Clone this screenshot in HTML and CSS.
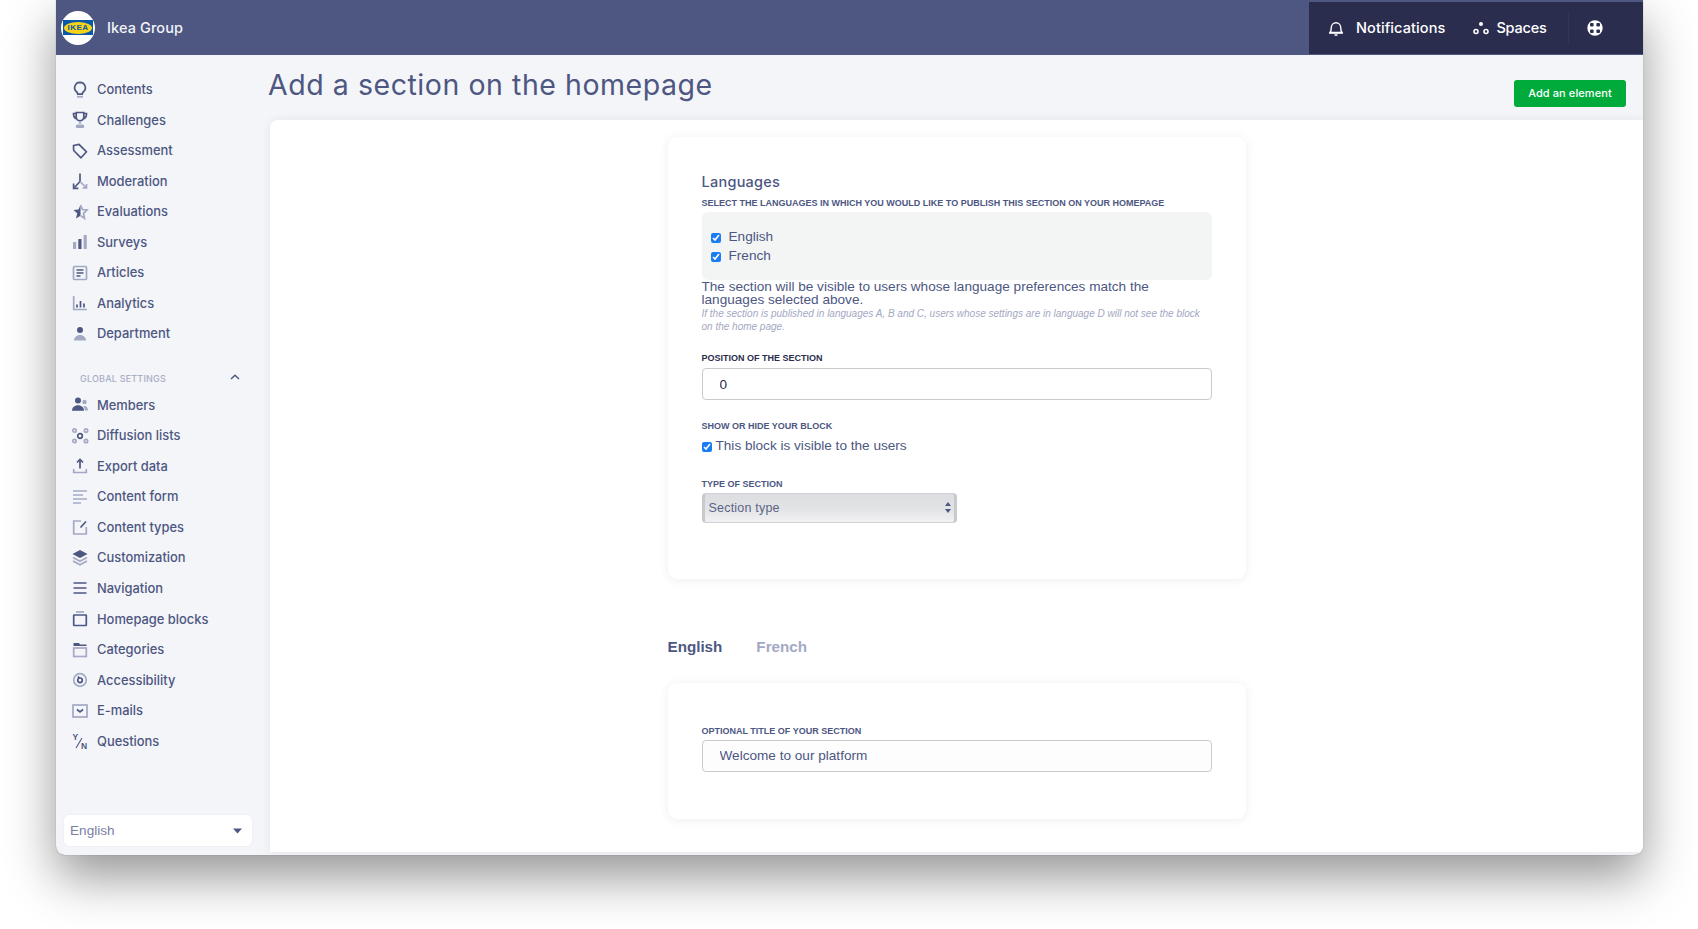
FILE: index.html
```html
<!DOCTYPE html>
<html lang="en">
<head>
<meta charset="utf-8">
<title>Add a section on the homepage</title>
<link rel="stylesheet" href="styles.css">
</head>
<body>
<div class="window">
  <header class="topbar">
    <div class="brand">
      <span class="logo"><span class="logo-oval"><span class="logo-text">IKEA</span></span></span>
      <span class="brand-name">Ikea Group</span>
    </div>
    <nav class="topnav">
      <a class="topnav-item notif"><svg class="top-icon" width="16" height="18" viewBox="0 0 16 18"><path d="M2 13.500c1-1 1.300-2.500 1.300-5a4.700 4.700 0 0 1 9.400 0c0 2.500.3 4 1.300 5z" fill="none" stroke="#fff" stroke-width="1.400" stroke-linejoin="round"/><path d="M1 14h14M6.500 16h3" stroke="#fff" stroke-width="1.400"/></svg>Notifications</a>
      <a class="topnav-item spaces"><svg class="top-icon" width="16" height="14" viewBox="0 0 16 14"><circle cx="8" cy="3" r="2" fill="#fff"/><circle cx="3" cy="10.500" r="2" fill="none" stroke="#fff" stroke-width="1.600"/><circle cx="13" cy="10.500" r="2" fill="none" stroke="#fff" stroke-width="1.600"/></svg>Spaces</a>
      <span class="topnav-sep"></span>
      <a class="help"><svg width="16" height="16" viewBox="0 0 16 16"><circle cx="8" cy="8" r="7.700" fill="#fff"/><rect x="3" y="3" width="3.600" height="3.600" rx="1" fill="#2b2d4e"/><rect x="9.400" y="3" width="3.600" height="3.600" rx="1" fill="#2b2d4e"/><rect x="3" y="9.400" width="3.600" height="3.600" rx="1" fill="#2b2d4e"/><rect x="9.400" y="9.400" width="3.600" height="3.600" rx="1" fill="#2b2d4e"/></svg></a>
    </nav>
  </header>
  <div class="body">
    <aside class="sidebar">
      <ul class="menu">
        <li class="menu-item"><svg class="ico" viewBox="0 0 20 20"><path class="d" d="M10 2.300a5.400 5.400 0 0 0-3.200 9.700c.6.500.8 1.300.9 2.200h4.600c.1-.9.300-1.700.9-2.200A5.400 5.400 0 0 0 10 2.300z"/><path class="l" d="M7 16.800h6"/></svg>Contents</li>
        <li class="menu-item"><svg class="ico" viewBox="0 0 20 20"><path class="d" d="M6.200 2.500h7.600v4.500a3.800 3.800 0 0 1-7.600 0zM6.200 3.500H3.500c0 3 1 4.800 3.300 5.500M13.800 3.500h2.700c0 3-1 4.800-3.300 5.500"/><path class="l" d="M10 11v3"/><rect class="lf" x="5.800" y="14.500" width="8.400" height="3.500" rx="1.500"/></svg>Challenges</li>
        <li class="menu-item"><svg class="ico" viewBox="0 0 20 20"><path class="d" d="M3.500 4.500l5.500-1.200 7.500 7.500-5.500 6-7.300-7.300z" stroke-linejoin="round"/></svg>Assessment</li>
        <li class="menu-item"><svg class="ico" viewBox="0 0 20 20"><path class="d" d="M10 2.500v8L4.500 16.500"/><path class="d" d="M3.600 12.500v4.800h4.800"/><path class="l" d="M10 10.500l6 6M16.500 13v4h-4"/></svg>Moderation</li>
        <li class="menu-item"><svg class="ico" viewBox="0 0 20 20"><path class="df" d="M10.500 3L8.500 7.500 3.500 8l3.700 3.300L6 16.500l4.500-2.800z"/><path class="l" d="M10.500 3l2 4.500 4.500.5-3.500 3.300 1 5-4-2.700" stroke-width="1"/></svg>Evaluations</li>
        <li class="menu-item"><svg class="ico" viewBox="0 0 20 20"><rect class="lf" x="3" y="10" width="3.200" height="7" rx=".5"/><rect class="df" x="8.300" y="7" width="3.200" height="10" rx=".5"/><rect class="lf" x="13.600" y="3" width="3.200" height="14" rx=".5"/></svg>Surveys</li>
        <li class="menu-item"><svg class="ico" viewBox="0 0 20 20"><rect class="l" x="3.500" y="3.500" width="13" height="13" rx="1" stroke-width="1.400"/><path class="d" d="M6.500 7h7M6.500 10h7M6.500 13h4"/></svg>Articles</li>
        <li class="menu-item"><svg class="ico" viewBox="0 0 20 20"><path class="l" d="M3.700 3v13.500h13.300" stroke-width="1.200"/><path class="d" d="M7 11.500v3M10.500 8v6.500M14 10.500v4"/></svg>Analytics</li>
        <li class="menu-item"><svg class="ico" viewBox="0 0 20 20"><circle class="df" cx="10" cy="6" r="3"/><path class="lf" d="M4 16.500c0-3 2.500-5.500 6-5.500s6 2.500 6 5.500z"/></svg>Department</li>
      </ul>
      <div class="menu-group">
        <span>GLOBAL SETTINGS</span>
        <svg width="10" height="6" viewBox="0 0 10 6"><path d="M1 5l4-3.800L9 5" fill="none" stroke="#4d5782" stroke-width="1.500"/></svg>
      </div>
      <ul class="menu">
        <li class="menu-item"><svg class="ico" viewBox="0 0 20 20"><circle class="df" cx="8" cy="5.500" r="3"/><path class="df" d="M2 15.800c0-3.200 2.600-5.500 6-5.500s6 2.300 6 5.500z"/><circle class="lf" cx="14.500" cy="7" r="2.200"/><path class="lf" d="M14.500 11c2 0 3.500 1.800 3.500 4.500h-3c-.2-1.600-.7-3-1.800-4.300z"/></svg>Members</li>
        <li class="menu-item"><svg class="ico" viewBox="0 0 20 20"><circle class="d" cx="10" cy="10" r="2.300" stroke-width="1.500"/><g class="l" stroke-width="1.200"><circle cx="4.500" cy="4.500" r="1.700"/><circle cx="16" cy="4.500" r="1.700"/><circle cx="4.500" cy="15" r="1.700"/><circle cx="16" cy="15" r="1.700"/></g></svg>Diffusion lists</li>
        <li class="menu-item"><svg class="ico" viewBox="0 0 20 20"><path class="d" d="M10 12.500V4M7 6.500l3-3 3 3"/><path class="l" d="M3.700 13v3.500h12.600V13" stroke-width="1.300"/></svg>Export data</li>
        <li class="menu-item"><svg class="ico" viewBox="0 0 20 20"><path class="l" d="M3 4h14M3 8h10M3 12h14M3 16h8" stroke-width="1.300"/></svg>Content form</li>
        <li class="menu-item"><svg class="ico" viewBox="0 0 20 20"><path class="l" d="M11 4H3.700v13h12.600v-7" stroke-width="1.400"/><path class="d" d="M10.500 10.500l5.500-6"/></svg>Content types</li>
        <li class="menu-item"><svg class="ico" viewBox="0 0 20 20"><path class="df" d="M10 2l7.500 4-7.500 4-7.500-4z"/><path class="l" d="M3 9.500l7 3.700 7-3.700M3 13l7 3.800 7-3.800" stroke-width="1.300"/></svg>Customization</li>
        <li class="menu-item"><svg class="ico" viewBox="0 0 20 20"><path class="d" d="M3.500 5h13M3.500 10h13M3.500 15h13"/></svg>Navigation</li>
        <li class="menu-item"><svg class="ico" viewBox="0 0 20 20"><rect class="d" x="3.700" y="6" width="12.600" height="10.500" rx=".5" stroke-width="1.500"/><path class="l" d="M6 3h8" stroke-width="1.200"/></svg>Homepage blocks</li>
        <li class="menu-item"><svg class="ico" viewBox="0 0 20 20"><path class="df" d="M3.500 3h5.500l1 1.500h6.500V6h-13z"/><rect class="l" x="3.700" y="8" width="12.600" height="8.500" stroke-width="1.400"/></svg>Categories</li>
        <li class="menu-item"><svg class="ico" viewBox="0 0 20 20"><circle class="l" cx="10" cy="10" r="6.300" stroke-width="1.400"/><circle class="d" cx="10" cy="10.300" r="2.300" stroke-width="1.300"/><path class="d" d="M8 6.500l1.500 1.800" stroke-width="1.100"/></svg>Accessibility</li>
        <li class="menu-item"><svg class="ico" viewBox="0 0 20 20"><rect class="l" x="3" y="4" width="14" height="12" stroke-width="1.300"/><path class="d" d="M7 8.500l3 2.500 3-2.500"/></svg>E-mails</li>
        <li class="menu-item"><svg class="ico" viewBox="0 0 20 20"><text class="yn" x="2.500" y="8.500">Y</text><path class="l2" d="M6 17l6-10"/><text class="yn" x="11" y="18">N</text></svg>Questions</li>
      </ul>
      <div class="lang-wrap">
        <select class="lang-select"><option>English</option><option>French</option></select>
        <svg class="caret" width="9" height="6" viewBox="0 0 9 6"><path d="M0 .5h9L4.500 5.500z" fill="#4d5782"/></svg>
      </div>
    </aside>
    <main class="main">
      <div class="title-row">
        <h1 class="title">Add a section on the homepage</h1>
        <button class="add-btn">Add an element</button>
      </div>
      <section class="panel">
        <div class="card card-settings">
          <h2 class="card-title">Languages</h2>
          <label class="field-label">Select the languages in which you would like to publish this section on your homepage</label>
          <div class="lang-box">
            <label class="check-row"><input type="checkbox" checked>English</label>
            <label class="check-row"><input type="checkbox" checked>French</label>
          </div>
          <p class="hint">The section will be visible to users whose language preferences match the languages selected above.</p>
          <p class="hint-small">If the section is published in languages A, B and C, users whose settings are in language D will not see the block on the home page.</p>
          <label class="field-label dark gap-a">Position of the section</label>
          <input class="text-input dark-value" type="text" value="0">
          <label class="field-label gap-b">Show or hide your block</label>
          <label class="visible-row"><input type="checkbox" checked>This block is visible to the users</label>
          <label class="field-label gap-c">Type of section</label>
          <div class="select-wrap">
            <select class="type-select"><option>Section type</option></select>
            <svg class="updown" width="6" height="11" viewBox="0 0 6 11"><path d="M3 0l3 4H0zM3 11L0 7h6z" fill="#4d5782"/></svg>
          </div>
        </div>
        <div class="tabs">
          <a class="tab active">English</a>
          <a class="tab">French</a>
        </div>
        <div class="card card-title-section">
          <label class="field-label">Optional title of your section</label>
          <input class="text-input" type="text" value="Welcome to our platform">
        </div>
      </section>
    </main>
  </div>
</div>
</body>
</html>
```
FILE: styles.css
```css
* { box-sizing: border-box; }
html, body { margin: 0; height: 100%; background: #fff; overflow: hidden; }
body { font-family: "Inter", "Liberation Sans", sans-serif; padding-left: 56px; }
ul { list-style: none; margin: 0; padding: 0; }

.window {
  width: 1587px;
  height: 855px;
  border-radius: 0 0 9px 9px;
  background: #f4f5f8;
  box-shadow: 0 0 1px rgba(0,0,0,.45), 0 22px 50px rgba(0,0,0,.42);
  display: flex;
  flex-direction: column;
  overflow: hidden;
}

/* top bar */
.topbar {
  height: 55px;
  flex: none;
  background: #4d5782;
  display: flex;
  justify-content: space-between;
  color: #fff;
}
.brand { display: flex; align-items: center; padding-left: 5px; }
.logo {
  width: 34px; height: 34px;
  border-radius: 50%;
  background: #fff;
  display: flex; align-items: center; justify-content: center;
}
.logo-oval {
  width: 30px; height: 15px;
  background: #0a58a8;
  display: flex; align-items: center; justify-content: center;
}
.logo-text {
  display: block;
  background: #f6d21a;
  color: #0a58a8;
  font: 700 8px/12px "Liberation Sans", sans-serif;
  letter-spacing: .5px;
  width: 28px;
  text-align: center;
  border-radius: 50%;
}
.brand-name { margin-left: 12px; font-size: 14.500px; font-weight: 500; letter-spacing: .1px; color: #f2f3f8; }
.topnav {
  width: 334px;
  margin-top: 2px; margin-bottom: 1px;
  padding-bottom: 1px;
  background: #2b2d4e;
  display: flex;
  align-items: center;
  font-size: 14.500px;
  font-weight: 500;
  letter-spacing: .1px;
}
.topnav-item { display: flex; align-items: center; }
.top-icon { flex: none; }
.notif { margin-left: 19px; gap: 12px; }
.spaces { margin-left: 28px; gap: 7px; letter-spacing: -.2px; }
.topnav-sep { width: 1px; height: 30px; background: #34365a; margin-left: 21px; }
.help { display: flex; margin-left: 18px; }

/* layout */
.body { flex: 1; display: flex; min-height: 0; }
.sidebar {
  width: 204px;
  flex: none;
  padding: 19.300px 8px 8px 0;
  display: flex;
  flex-direction: column;
}
.menu-item {
  height: 30.550px;
  display: flex;
  align-items: center;
  padding-left: 14px;
  font-size: 12.900px;
  font-weight: 500;
  color: #4d5782;
  white-space: nowrap;
}
.ico { width: 20px; height: 20px; margin-right: 7px; flex: none; }
.d { fill: none; stroke: #4d5782; stroke-width: 1.700; }
.l { fill: none; stroke: #a3a9c5; stroke-width: 1.700; }
.l2 { fill: none; stroke: #4d5782; stroke-width: 1.100; }
.df { fill: #4d5782; }
.lf { fill: #a3a9c5; }
.yn { font: 700 8.500px "Liberation Sans", sans-serif; fill: #4d5782; }
.menu-group {
  margin-top: 20px;
  height: 20.700px;
  padding: 0 12px 3px 24px;
  display: flex;
  align-items: center;
  justify-content: space-between;
  font-size: 9px;
  font-weight: 500;
  letter-spacing: .2px;
  color: #a9aec6;
}
.menu-group svg { margin-top: -3px; }
.lang-wrap { position: relative; margin: auto 0 0 7px; }
.lang-select {
  appearance: none;
  width: 190px; height: 33px;
  border: 1px solid #eef0f4;
  border-radius: 7px;
  background: #fff;
  padding: 0 6px;
  font: 13.600px "Liberation Sans", sans-serif;
  color: #7a80a3;
}
.caret { position: absolute; right: 10px; top: 14px; }

/* main */
.main { flex: 1; min-width: 0; display: flex; flex-direction: column; padding-bottom: 3px; }
.title-row {
  height: 65px;
  flex: none;
  display: flex;
  justify-content: space-between;
  align-items: flex-start;
  padding: 0 17px 0 8px;
}
.title {
  margin: 15.500px 0 0;
  font-size: 28.500px;
  line-height: 28px;
  font-weight: 400;
  letter-spacing: .55px;
  color: #4d5782;
}
.add-btn {
  margin-top: 25px;
  width: 112px; height: 27px;
  border: 0;
  border-radius: 3px;
  background: #00ab3c;
  color: #fff;
  font: 500 11px "Inter", sans-serif;
  letter-spacing: .1px;
  padding: 0 0 1px;
}
.panel {
  flex: 1;
  min-height: 0;
  margin-left: 10px;
  background: #fff;
  border-radius: 8px 0 0 0;
  box-shadow: 0 0 10px rgba(0,0,0,.07);
  padding-top: 17px;
  overflow: hidden;
}
.card {
  width: 578px;
  margin: 0 auto;
  background: #fff;
  border-radius: 9px;
  box-shadow: 0 1px 10px rgba(60,65,100,.09);
  padding-left: 34px;
  padding-right: 34px;
}
.card-settings { padding-top: 36px; padding-bottom: 56px; }
.card-title-section { margin-top: 26px; padding-top: 42px; padding-bottom: 47px; }
.card-title { margin: 0; font: 500 14.500px/18px "Inter", sans-serif; letter-spacing: .25px; color: #4d5782; }
.field-label {
  display: block;
  margin-top: 6px;
  font: 700 9px/12px "Liberation Sans", sans-serif;
  text-transform: uppercase;
  color: #4d5782;
}
.field-label.dark { color: #2b2d4e; }
.card-title-section .field-label { margin-top: 0; }
.gap-a.field-label { margin-top: 19px; }
.gap-b.field-label { margin-top: 20px; }
.gap-c.field-label { margin-top: 23.500px; }
.lang-box {
  margin-top: 3px;
  height: 68px;
  background: #f3f5f5;
  border-radius: 6px;
  padding: 15px 9px 0;
}
.check-row {
  display: flex;
  align-items: center;
  height: 18.800px;
  font: 13.600px "Liberation Sans", sans-serif;
  color: #4d5782;
}
.check-row input, .visible-row input {
  width: 10px; height: 10px;
  margin: 4px 8px 0 0;
  accent-color: #1a7cf2;
}
.visible-row input { margin-right: 4px; margin-top: 4px; }
.hint {
  margin: 0;
  font: 13.600px/13px "Liberation Sans", sans-serif;
  color: #4d5782;
}
.hint-small {
  margin: 1px 0 0;
  font: italic 10px/13px "Liberation Sans", sans-serif;
  color: #a3a8c2;
}
.text-input {
  display: block;
  width: 100%;
  height: 32px;
  margin-top: 4px;
  border: 1px solid #c9cad0;
  border-radius: 4px;
  background: #fff;
  padding: 0 17px;
  font: 13.600px "Liberation Sans", sans-serif;
  color: #4d5782;
}
.card-title-section .text-input { margin-top: 3px; background: #fdfdfe; }
.dark-value { color: #2b2d4e; }
.visible-row {
  display: flex;
  align-items: center;
  height: 18px;
  margin-top: 4px;
  font: 13.600px "Liberation Sans", sans-serif;
  color: #4d5782;
}
.select-wrap { position: relative; width: 255px; margin-top: 3px; }
.type-select {
  appearance: none;
  display: block;
  width: 255px;
  height: 30px;
  border: 1px solid #d0d1d5;
  border-left: 3px solid #c8cacf;
  border-right: 3px solid #c8cacf;
  border-radius: 4px;
  background: linear-gradient(#dcdde0, #e3e4e6 55%, #f1f1f3);
  padding: 0 4px;
  font: 12.500px "Liberation Sans", sans-serif;
  letter-spacing: .2px;
  color: #5b6488;
}
.updown { position: absolute; right: 6px; top: 9px; }
.tabs { display: flex; gap: 34px; width: 578px; margin: 58px auto 0; }
.tab { font: 700 15.200px/20px "Liberation Sans", sans-serif; color: #a3a8c4; }
.tab.active { color: #4d5782; }
```
